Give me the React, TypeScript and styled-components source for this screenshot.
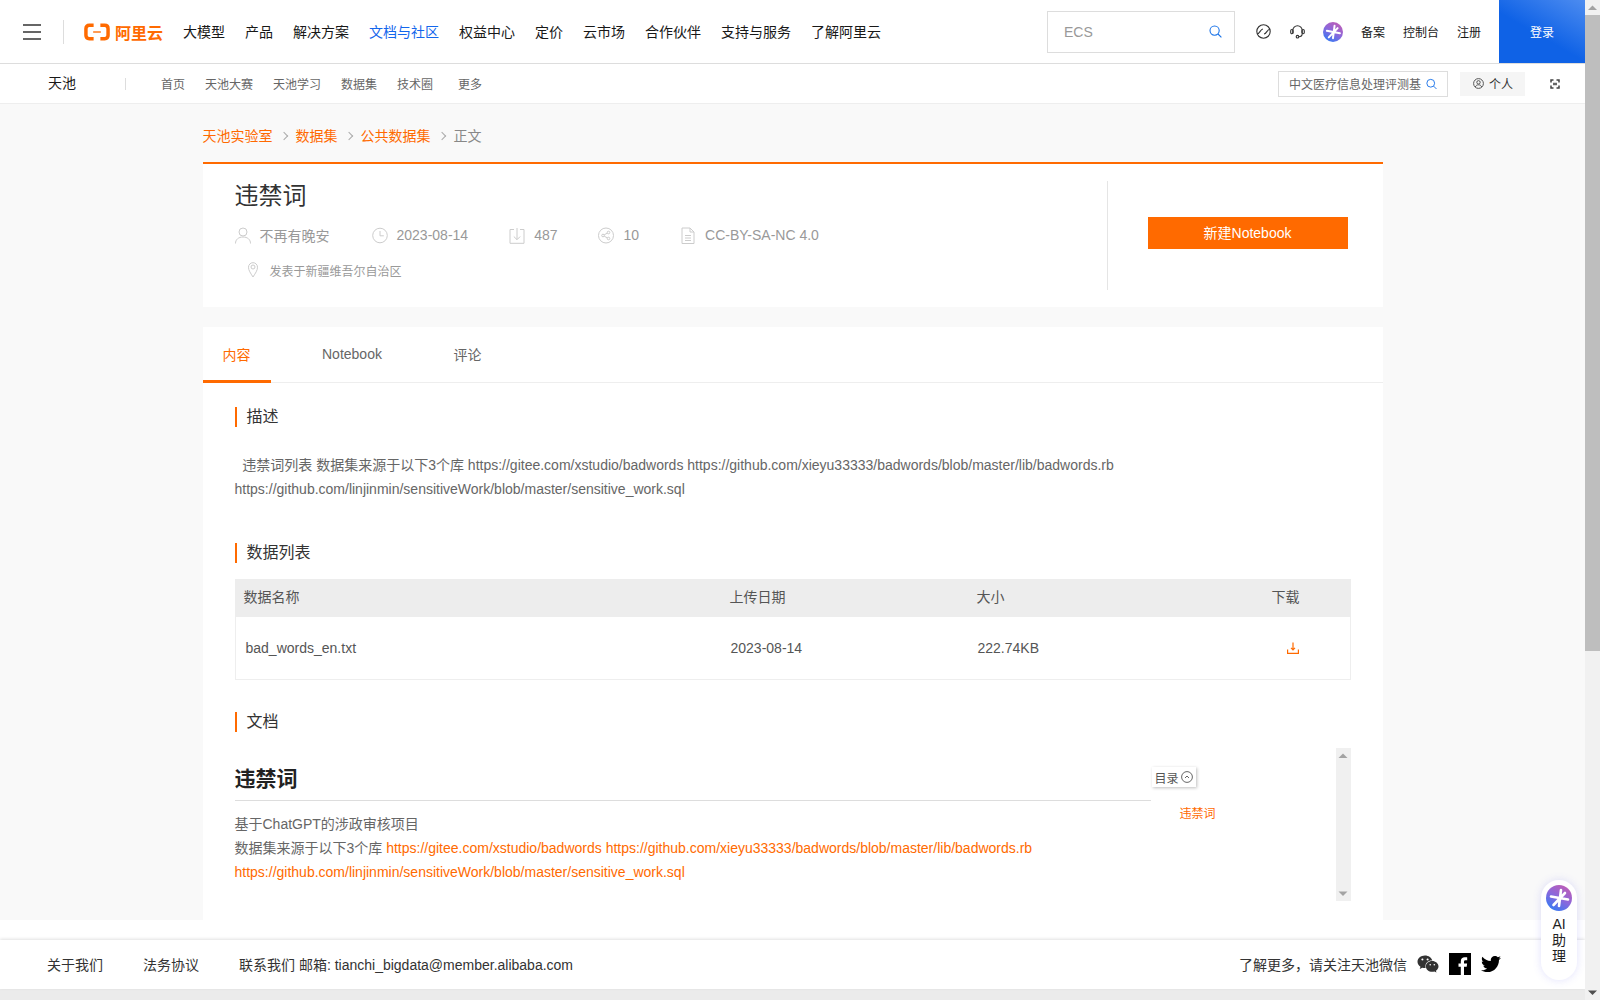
import React from 'react';
import styled, { createGlobalStyle } from 'styled-components';
import { FaWeixin, FaTwitter } from 'react-icons/fa';

const GlobalStyle = createGlobalStyle`
  html, body {
    margin: 0;
    padding: 0;
    height: 100%;
    overflow: hidden;
    background: #f9f9f9;
    font-family: "Liberation Sans", "Noto Sans CJK SC", sans-serif;
    font-size: 14px;
    color: #333;
  }
  * {
    box-sizing: border-box;
  }
`;

const navItems = ['大模型', '产品', '解决方案', '文档与社区', '权益中心', '定价', '云市场', '合作伙伴', '支持与服务', '了解阿里云'];
const subNavItems = ['首页', '天池大赛', '天池学习', '数据集', '技术圈'];

const SearchIcon = ({ size = 13 }: { size?: number }) => (
  <svg width={size} height={size} viewBox="0 0 13 13" fill="none" stroke="#1a73e8" strokeWidth="1.1">
    <circle cx="5.6" cy="5.6" r="4.6" />
    <path d="M9 9l3.4 3.4" />
  </svg>
);

const StarLogo = ({ id, size }: { id: string; size: number }) => (
  <svg width={size} height={size} viewBox="0 0 26 26">
    <defs>
      <linearGradient id={id} x1="0.8" y1="0" x2="0.2" y2="1">
        <stop offset="0" stopColor="#c25cb4" />
        <stop offset="0.5" stopColor="#8a68dc" />
        <stop offset="1" stopColor="#2f7bf5" />
      </linearGradient>
    </defs>
    <circle cx="13" cy="13" r="13" fill={`url(#${id})`} />
    <path d="M15 5l-2 16M5 11.5l17 3M7.5 20L19 8" stroke="#fff" strokeWidth="2.6" strokeLinecap="round" fill="none" />
  </svg>
);

const MetaIcon = ({ children }: { children: React.ReactNode }) => (
  <svg width="16" height="17" viewBox="0 0 16 17" fill="none" stroke="#ccc" strokeWidth="1">
    {children}
  </svg>
);

const App = () => {
  return (
    <>
      <GlobalStyle />
      <Shell>
        <PageArea>
          <TopBar>
            <MenuButton>
              <span />
              <span />
              <span />
            </MenuButton>
            <TopDivider />
            <Logo>
              <svg width="27" height="18" viewBox="0 0 27 18" fill="none" stroke="#ff6a00">
                <path d="M10 2H5.5Q2 2 2 5.5v7Q2 16 5.5 16H10" strokeWidth="3.6" />
                <path d="M17 2h4.500Q25 2 25 5.500v7q0 3.500-3.500 3.500H17" strokeWidth="3.600" />
                <path d="M9.500 9h8" strokeWidth="1.400" />
              </svg>
              <LogoText>阿里云</LogoText>
            </Logo>
            <MainNav>
              {navItems.map((item) => (
                <MainNavItem key={item} $active={item === '文档与社区'}>
                  {item}
                </MainNavItem>
              ))}
            </MainNav>
            <TopRight>
              <TopSearch>
                <TopSearchText>ECS</TopSearchText>
                <SearchIcon />
              </TopSearch>
              <TopIcon $gap={21}>
                <svg width="15" height="15" viewBox="0 0 15 15" fill="none" stroke="#333" strokeWidth="1.100">
                  <circle cx="7.500" cy="7.500" r="6.700" />
                  <path d="M1.200 9.800C4 9.800 4.300 5 7 5" />
                  <path d="M13.800 5.200C11 5.200 10.700 10 8 10" />
                </svg>
              </TopIcon>
              <TopIcon $gap={19}>
                <svg width="15" height="15" viewBox="0 0 15 15" fill="none" stroke="#333" strokeWidth="1.100">
                  <path d="M2.800 9.500V6.500a4.700 4.700 0 0 1 9.400 0v3" />
                  <rect x="0.700" y="5.500" width="2.400" height="4.200" rx="1.200" />
                  <rect x="11.900" y="5.500" width="2.400" height="4.200" rx="1.200" />
                  <path d="M12.200 9.700c0 2-1.500 3-3.500 3" />
                  <circle cx="7.500" cy="12.700" r="1.300" />
                </svg>
              </TopIcon>
              <TopIcon $gap={18}>
                <StarLogo id="star-top" size={20} />
              </TopIcon>
              <TopLink>备案</TopLink>
              <TopLink>控制台</TopLink>
              <TopLink>注册</TopLink>
              <LoginButton>登录</LoginButton>
            </TopRight>
          </TopBar>

          <SubBar>
            <SubBrand>天池</SubBrand>
            <SubDivider />
            <SubNav>
              {subNavItems.map((item) => (
                <SubNavItem key={item}>{item}</SubNavItem>
              ))}
              <SubNavItem $more>更多</SubNavItem>
            </SubNav>
            <SubRight>
              <SubSearch>
                <SubSearchText>中文医疗信息处理评测基</SubSearchText>
                <SearchIcon size={12} />
              </SubSearch>
              <PersonalButton>
                <svg width="11" height="11" viewBox="0 0 11 11" fill="none" stroke="#555" strokeWidth="1">
                  <circle cx="5.500" cy="5.500" r="4.900" />
                  <circle cx="5.500" cy="4.300" r="1.700" />
                  <path d="M2.300 9c.6-1.600 1.800-2.200 3.200-2.200S8.100 7.400 8.700 9" />
                </svg>
                个人
              </PersonalButton>
              <ExpandIcon>
                <svg width="10" height="10" viewBox="0 0 10 10" fill="none" stroke="#444" strokeWidth="1.500">
                  <path d="M3.500 1H1v2.500M6.500 1H9v2.500M1 6.500V9h2.500M9 6.500V9H6.500" />
                  <path d="M3 4.300h4M3 5.700h4" strokeWidth="1" />
                </svg>
              </ExpandIcon>
            </SubRight>
          </SubBar>

          <Main>
            <Breadcrumb>
              <CrumbLink>天池实验室</CrumbLink>
              <Chevron />
              <CrumbLink>数据集</CrumbLink>
              <Chevron />
              <CrumbLink>公共数据集</CrumbLink>
              <Chevron />
              <CrumbCurrent>正文</CrumbCurrent>
            </Breadcrumb>

            <InfoCard>
              <InfoLeft>
                <InfoTitle>违禁词</InfoTitle>
                <MetaRow>
                  <MetaItem>
                    <MetaIcon>
                      <circle cx="8" cy="5" r="4" />
                      <path d="M.5 16.500c0-4 3-6.500 7.500-6.500s7.500 2.500 7.500 6.500" />
                    </MetaIcon>
                    不再有晚安
                  </MetaItem>
                  <MetaItem>
                    <MetaIcon>
                      <circle cx="8" cy="8.500" r="7.300" />
                      <path d="M8 4v4.800h3.800" />
                    </MetaIcon>
                    2023-08-14
                  </MetaItem>
                  <MetaItem>
                    <MetaIcon>
                      <path d="M5 2.500H1v13.800h14V2.500h-4" />
                      <path d="M8 1v11.500M4.800 9.500L8 12.700l3.200-3.200" />
                    </MetaIcon>
                    487
                  </MetaItem>
                  <MetaItem>
                    <MetaIcon>
                      <circle cx="8" cy="8.500" r="7.500" />
                      <circle cx="5" cy="8.500" r="1.300" />
                      <circle cx="10.500" cy="5.500" r="1.300" />
                      <circle cx="10.500" cy="11.500" r="1.300" />
                      <path d="M6.200 7.800l3.200-1.700M6.200 9.200l3.200 1.700" />
                    </MetaIcon>
                    10
                  </MetaItem>
                  <MetaItem>
                    <MetaIcon>
                      <path d="M2 1h8l4 4v11.500H2z" />
                      <path d="M10 1v4h4M5 8.500h6M5 11h6M5 13.500h6" />
                    </MetaIcon>
                    CC-BY-SA-NC 4.0
                  </MetaItem>
                </MetaRow>
                <LocationRow>
                  <svg width="10" height="16" viewBox="0 0 10 16" fill="none" stroke="#ccc" strokeWidth="1">
                    <path d="M5 15C2.500 11 .5 8.500.5 5.200a4.500 4.500 0 0 1 9 0C9.500 8.500 7.500 11 5 15z" />
                    <circle cx="5" cy="5" r="2" />
                  </svg>
                  发表于新疆维吾尔自治区
                </LocationRow>
              </InfoLeft>
              <InfoRight>
                <NewButton>新建Notebook</NewButton>
              </InfoRight>
            </InfoCard>

            <ContentCard>
              <Tabs>
                <Tab $active>内容</Tab>
                <Tab>Notebook</Tab>
                <Tab>评论</Tab>
              </Tabs>
              <Body>
                <SectionTitle $top={24}>描述</SectionTitle>
                <Description>
                  &nbsp;&nbsp;违禁词列表 数据集来源于以下3个库 https://gitee.com/xstudio/badwords https://github.com/xieyu33333/badwords/blob/master/lib/badwords.rb
                  <br />
                  https://github.com/linjinmin/sensitiveWork/blob/master/sensitive_work.sql
                </Description>

                <SectionTitle $top={42}>数据列表</SectionTitle>
                <DataTable>
                  <TableHead>
                    <span>数据名称</span>
                    <span>上传日期</span>
                    <span>大小</span>
                    <span>下载</span>
                  </TableHead>
                  <TableRow>
                    <span>bad_words_en.txt</span>
                    <span>2023-08-14</span>
                    <span>222.74KB</span>
                    <DownloadCell>
                      <svg width="12" height="12" viewBox="0 0 12 12" fill="none" stroke="#ff6a00" strokeWidth="1.200">
                        <path d="M.6 7.500v3.800h10.800V7.500" />
                        <path d="M6 .5v7M4 5.800l2 2 2-2" />
                      </svg>
                    </DownloadCell>
                  </TableRow>
                </DataTable>

                <SectionTitle $top={32}>文档</SectionTitle>
                <DocViewer>
                  <Article>
                    <ArticleTitle>违禁词</ArticleTitle>
                    <ArticleText>
                      基于ChatGPT的涉政审核项目
                      <br />
                      数据集来源于以下3个库 <DocLink>https://gitee.com/xstudio/badwords</DocLink> <DocLink>https://github.com/xieyu33333/badwords/blob/master/lib/badwords.rb</DocLink>
                      <br />
                      <DocLink>https://github.com/linjinmin/sensitiveWork/blob/master/sensitive_work.sql</DocLink>
                    </ArticleText>
                  </Article>
                  <Toc>
                    <TocButton>
                      目录
                      <svg width="12" height="12" viewBox="0 0 12 12" fill="none" stroke="#666" strokeWidth="1">
                        <circle cx="6" cy="6" r="5.400" />
                        <path d="M4 7l2-2 2 2" />
                      </svg>
                    </TocButton>
                    <TocLink>违禁词</TocLink>
                  </Toc>
                  <DocScrollbar>
                    <ArrowUp $color="#a3a3a3" />
                    <ArrowDown $color="#a3a3a3" />
                  </DocScrollbar>
                </DocViewer>
              </Body>
            </ContentCard>
          </Main>

          <FooterWrap>
            <Footer>
              <FooterLink>关于我们</FooterLink>
              <FooterLink>法务协议</FooterLink>
              <FooterLink>联系我们 邮箱: tianchi_bigdata@member.alibaba.com</FooterLink>
              <FooterRight>
                了解更多，请关注天池微信
                <WeixinIcon />
                <FacebookMark>
                  <svg width="22" height="22" viewBox="0 0 22 22">
                    <rect width="22" height="22" fill="#000" />
                    <path
                      d="M15 22v-8.200h2.700l.4-3.200H15V8.700c0-.9.3-1.500 1.600-1.500h1.600V4.400c-.3 0-1.300-.1-2.400-.1-2.400 0-4 1.400-4 4.100v2.200H9.500v3.200h2.300V22z"
                      fill="#fff"
                    />
                  </svg>
                </FacebookMark>
                <TwitterIcon />
              </FooterRight>
            </Footer>
          </FooterWrap>

          <AiButton>
            <StarLogo id="star-ai" size={26} />
            <AiText>
              AI
              <br />
              助
              <br />
              理
            </AiText>
          </AiButton>
        </PageArea>

        <PageScrollbar>
          <ArrowUp $color="#a3a3a3" />
          <ScrollThumb />
          <ArrowDown $color="#505050" />
        </PageScrollbar>
      </Shell>
    </>
  );
};

const Shell = styled.div`
  display: flex;
  height: 100vh;
  overflow: hidden;
`;

const PageArea = styled.div`
  position: relative;
  flex: 1;
  min-width: 0;
  overflow: hidden;
`;

const PageScrollbar = styled.div`
  display: flex;
  flex-direction: column;
  flex: none;
  justify-content: flex-start;
  width: 15px;
  background: #f1f1f1;

  > :last-child {
    margin-top: auto;
  }
`;

const ScrollThumb = styled.div`
  width: 15px;
  height: 636px;
  background: #bebebe;
`;

const ArrowUp = styled.div<{ $color: string }>`
  flex: none;
  width: 15px;
  height: 15px;
  background: ${(p) => p.$color};
  clip-path: polygon(50% 36%, 80% 66%, 20% 66%);
`;

const ArrowDown = styled.div<{ $color: string }>`
  flex: none;
  width: 15px;
  height: 15px;
  background: ${(p) => p.$color};
  clip-path: polygon(20% 36%, 80% 36%, 50% 66%);
`;

const TopBar = styled.header`
  display: flex;
  align-items: center;
  height: 64px;
  padding-left: 23px;
  background: #fff;
  border-bottom: 1px solid #ddd;
`;

const MenuButton = styled.div`
  display: flex;
  flex-direction: column;
  justify-content: space-between;
  width: 18px;
  height: 16px;

  span {
    display: block;
    height: 2px;
    background: #666;
  }
`;

const TopDivider = styled.div`
  width: 1px;
  height: 24px;
  margin: 0 20px 0 22px;
  background: #ddd;
`;

const Logo = styled.div`
  display: flex;
  align-items: center;
  gap: 5px;
  width: 79px;
`;

const LogoText = styled.span`
  font-size: 16px;
  font-weight: 700;
  color: #ff6a00;
  white-space: nowrap;
`;

const MainNav = styled.nav`
  display: flex;
  gap: 20px;
  margin: 0 0 2px 20px;
`;

const MainNavItem = styled.a<{ $active?: boolean }>`
  font-size: 14px;
  color: ${(p) => (p.$active ? '#1366ec' : '#181818')};
  white-space: nowrap;
`;

const TopRight = styled.div`
  display: flex;
  align-items: center;
  height: 63px;
  margin-left: auto;
`;

const TopSearch = styled.div`
  display: flex;
  align-items: center;
  justify-content: space-between;
  width: 188px;
  height: 42px;
  padding: 0 12px 0 16px;
  border: 1px solid #ddd;
`;

const TopSearchText = styled.span`
  font-size: 14px;
  color: #999;
`;

const TopIcon = styled.span<{ $gap: number }>`
  display: flex;
  margin-left: ${(p) => p.$gap}px;
`;

const TopLink = styled.a`
  margin-left: 18px;
  font-size: 12px;
  color: #181818;
  white-space: nowrap;
`;

const LoginButton = styled.a`
  display: flex;
  align-items: center;
  justify-content: center;
  width: 86px;
  height: 63px;
  margin-left: 18px;
  font-size: 12px;
  color: #fff;
  background: linear-gradient(30deg, #0f62e6 45%, #4d8cf0 100%);
`;

const SubBar = styled.div`
  display: flex;
  align-items: center;
  height: 40px;
  padding: 0 25px 0 48px;
  background: #fff;
  border-bottom: 1px solid #eee;
`;

const SubBrand = styled.span`
  margin-bottom: 3px;
  font-size: 14px;
  color: #181818;
`;

const SubDivider = styled.div`
  width: 1px;
  height: 12px;
  margin: 0 35px 0 49px;
  background: #ddd;
`;

const SubNav = styled.nav`
  display: flex;
  gap: 20px;
  margin-bottom: 1px;
`;

const SubNavItem = styled.a<{ $more?: boolean }>`
  margin-left: ${(p) => (p.$more ? '5px' : '0')};
  font-size: 12px;
  color: #666;
  white-space: nowrap;
`;

const SubRight = styled.div`
  display: flex;
  align-items: center;
  margin-left: auto;
`;

const SubSearch = styled.div`
  display: flex;
  align-items: center;
  gap: 5px;
  width: 170px;
  height: 26px;
  padding: 0 10px;
  border: 1px solid #ddd;
`;

const SubSearchText = styled.span`
  flex: 1;
  font-size: 12px;
  color: #666;
  white-space: nowrap;
`;

const PersonalButton = styled.div`
  display: flex;
  align-items: center;
  gap: 5px;
  width: 65px;
  height: 24px;
  margin-left: 12px;
  padding-left: 13px;
  font-size: 12px;
  color: #333;
  background: #f5f5f5;
`;

const ExpandIcon = styled.span`
  display: flex;
  margin-left: 25px;
`;

const Main = styled.main`
  width: 1180px;
  margin: 0 auto;
`;

const Breadcrumb = styled.div`
  display: flex;
  align-items: center;
  height: 58px;
  padding-top: 4px;
  font-size: 14px;
`;

const CrumbLink = styled.a`
  color: #ff6a00;
`;

const CrumbCurrent = styled.span`
  color: #888;
`;

const Chevron = styled.i`
  display: block;
  width: 6px;
  height: 6px;
  margin: 1px 9px 0 8px;
  border-top: 1px solid #aaa;
  border-right: 1px solid #aaa;
  transform: rotate(45deg);
`;

const InfoCard = styled.section`
  display: flex;
  height: 145px;
  padding: 17px 0;
  background: #fff;
  border-top: 2px solid #ff6a00;
`;

const InfoLeft = styled.div`
  width: 905px;
  padding-left: 32px;
  border-right: 1px solid #e5e5e5;
`;

const InfoTitle = styled.h1`
  margin: 0;
  font-size: 24px;
  font-weight: 400;
  line-height: 30px;
  color: #333;
`;

const MetaRow = styled.div`
  display: flex;
  gap: 41px;
  height: 24px;
  margin-top: 12px;
`;

const MetaItem = styled.div`
  display: flex;
  align-items: center;
  gap: 9px;
  font-size: 14px;
  color: #999;

  &:first-child {
    margin-right: 1px;
  }
`;

const LocationRow = styled.div`
  display: flex;
  align-items: center;
  gap: 12px;
  height: 20px;
  margin-top: 13px;
  padding-left: 13px;
  font-size: 12px;
  color: #999;
`;

const InfoRight = styled.div`
  display: flex;
  align-items: center;
  flex: 1;
  padding: 0 0 6px 40px;
`;

const NewButton = styled.a`
  display: flex;
  align-items: center;
  justify-content: center;
  width: 200px;
  height: 32px;
  padding-bottom: 2px;
  font-size: 14px;
  color: #fff;
  background: #ff6a00;
`;

const ContentCard = styled.section`
  margin-top: 20px;
  min-height: 1198px;
  background: #fff;
`;

const Tabs = styled.div`
  display: flex;
  gap: 31.5px;
  height: 56px;
  border-bottom: 1px solid #eee;
`;

const Tab = styled.a<{ $active?: boolean }>`
  display: flex;
  align-items: center;
  height: 56px;
  padding: 1px 20px 0;
  font-size: 14px;
  color: ${(p) => (p.$active ? '#ff6a00' : '#666')};
  border-bottom: 3px solid ${(p) => (p.$active ? '#ff6a00' : 'transparent')};
`;

const Body = styled.div`
  padding: 0 32px;
`;

const SectionTitle = styled.h2<{ $top: number }>`
  height: 20px;
  margin: ${(p) => p.$top}px 0 0;
  padding-left: 10px;
  font-size: 16px;
  font-weight: 400;
  line-height: 20px;
  color: #333;
  border-left: 2px solid #ff6a00;
`;

const Description = styled.p`
  margin: 26px 0 0;
  font-size: 14px;
  line-height: 24px;
  color: #666;
`;

const DataTable = styled.div`
  margin-top: 16px;
  font-size: 14px;
  color: #555;
`;

const TableHead = styled.div`
  display: grid;
  grid-template-columns: 486px 247px 295px 1fr;
  align-items: center;
  height: 38px;
  padding: 0 0 4px 9px;
  background: #ededed;
`;

const TableRow = styled.div`
  display: grid;
  grid-template-columns: 485px 247px 295px 1fr;
  align-items: center;
  height: 63px;
  padding: 0 0 1px 10px;
  border: 1px solid #eee;
  border-top: 0;
`;

const DownloadCell = styled.span`
  display: flex;
  padding-left: 14px;
`;

const DocViewer = styled.div`
  display: flex;
  height: 153px;
  margin-top: 16px;
`;

const Article = styled.article`
  flex: none;
  width: 916px;
  padding-top: 16px;
`;

const ArticleTitle = styled.h1`
  margin: 0;
  padding-bottom: 6px;
  font-size: 21px;
  font-weight: 700;
  line-height: 30px;
  color: #222;
  border-bottom: 1px solid #ddd;
`;

const ArticleText = styled.p`
  margin: 11px 0 0;
  font-size: 14px;
  line-height: 24px;
  color: #666;
`;

const DocLink = styled.a`
  color: #ff6a00;
`;

const Toc = styled.aside`
  flex: 1;
  padding: 19px 0 0 1px;
`;

const TocButton = styled.div`
  display: flex;
  align-items: center;
  gap: 2px;
  width: 44px;
  height: 20px;
  padding-left: 3px;
  font-size: 12px;
  color: #555;
  background: #fff;
  box-shadow: 1px 1px 3px rgba(0, 0, 0, 0.25);
`;

const TocLink = styled.a`
  display: block;
  margin: 17px 0 0 28px;
  font-size: 12px;
  color: #ff6a00;
`;

const DocScrollbar = styled.div`
  display: flex;
  flex-direction: column;
  flex: none;
  justify-content: space-between;
  width: 15px;
  background: #f0f0f0;
`;

const FooterWrap = styled.div`
  position: absolute;
  right: 0;
  bottom: 0;
  left: 0;
  padding: 20px 0 11px;
  background: linear-gradient(#fff 0, #fff 69px, #ebebeb 69px);
`;

const Footer = styled.footer`
  display: flex;
  align-items: center;
  height: 49px;
  padding: 0 84px 2px 47px;
  gap: 40px;
  font-size: 14px;
  color: #333;
  background: #fff;
  box-shadow: 0 -1px 3px rgba(0, 0, 0, 0.12);
`;

const FooterLink = styled.a`
  white-space: nowrap;
`;

const FooterRight = styled.div`
  display: flex;
  align-items: center;
  margin-left: auto;
  white-space: nowrap;
`;

const WeixinIcon = styled(FaWeixin)`
  width: 22px;
  height: 22px;
  margin-left: 10px;
  color: #333;
`;

const FacebookMark = styled.span`
  display: flex;
  margin-left: 10px;
`;

const TwitterIcon = styled(FaTwitter)`
  width: 20px;
  height: 20px;
  margin-left: 10px;
  color: #000;
`;

const AiButton = styled.div`
  position: absolute;
  right: 8px;
  bottom: 20px;
  z-index: 10;
  display: flex;
  flex-direction: column;
  align-items: center;
  width: 36px;
  height: 100px;
  padding-top: 5px;
  background: #fff;
  border-radius: 18px;
  box-shadow: 0 0 8px rgba(90, 90, 240, 0.18);
`;

const AiText = styled.div`
  margin-top: 5px;
  font-size: 14px;
  line-height: 16px;
  text-align: center;
  color: #222;
`;

export default App;
